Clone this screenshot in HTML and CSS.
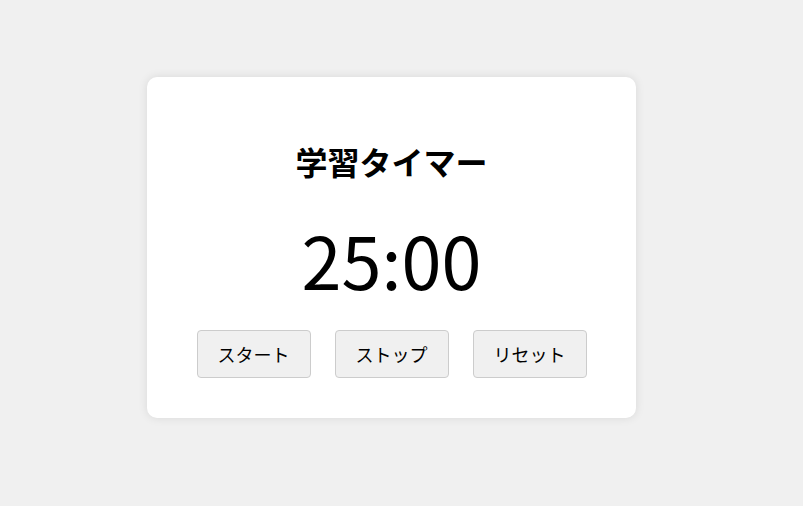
FILE: index.html
```html
<!DOCTYPE html>
<html lang="ja">
<head>
<meta charset="utf-8">
<title>学習タイマー</title>
<link rel="stylesheet" href="styles.css">
</head>
<body>
<div class="card">
  <h1 class="title">学習タイマー</h1>
  <div class="timer">25:00</div>
  <div class="controls">
    <button class="btn">スタート</button>
    <button class="btn">ストップ</button>
    <button class="btn">リセット</button>
  </div>
</div>
</body>
</html>
```

FILE: styles.css
```css
html, body {
  margin: 0;
  padding: 0;
}
body {
  background: #f0f0f0;
  font-family: "Noto Sans CJK JP", "Noto Sans", sans-serif;
  color: #000;
  height: 506px;
  display: flex;
  justify-content: center;
  align-items: flex-start;
}
.card {
  margin-top: 77px;
  margin-right: 20px;
  width: 409px;
  padding: 40px;
  background: #fff;
  border-radius: 10px;
  box-shadow: 0 0 10px rgba(0, 0, 0, 0.1);
  text-align: center;
}
.title {
  font-size: 32px;
  font-weight: 700;
  margin: 21px 0;
  line-height: 46px;
}
.timer {
  font-size: 72px;
  line-height: 107px;
  margin: 0 0 18px;
}
.controls {
  display: flex;
  justify-content: center;
  gap: 24px;
}
.btn {
  font-family: "Noto Sans CJK JP", sans-serif;
  font-size: 18px;
  line-height: 26px;
  padding: 10px 20px;
  width: 114px;
  background: #f0f0f0;
  border: 1px solid #ccc;
  border-radius: 4px;
  color: #000;
}
```
